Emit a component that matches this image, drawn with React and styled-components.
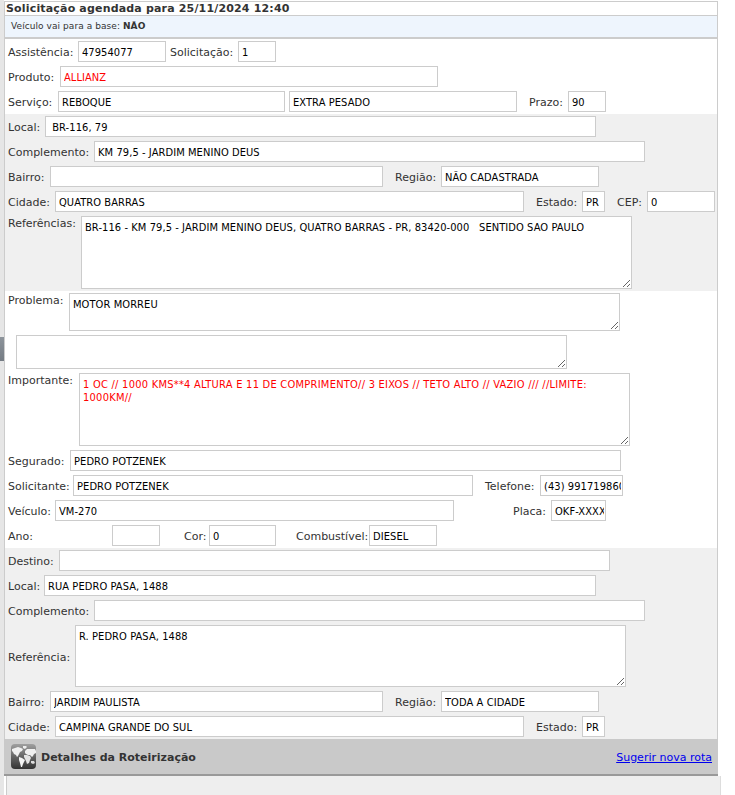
import styled, { createGlobalStyle } from 'styled-components';

const GlobalStyle = createGlobalStyle`
  html, body {
    margin: 0;
    padding: 0;
    background: #ffffff;
  }
`;

function Line({ children }) {
  return <Row>{children}</Row>;
}

function Field({ label, lw, w, value, red, ml }) {
  return (
    <>
      <Label $w={lw} $ml={ml}>{label}</Label>
      <Input $w={w} $red={red} value={value} readOnly />
    </>
  );
}

function WorldIcon() {
  return (
    <svg width="25" height="25" viewBox="0 0 25 25">
      <defs>
        <linearGradient id="globeBg" x1="0" y1="0" x2="0" y2="1">
          <stop offset="0" stopColor="#a0a0a0" />
          <stop offset="0.5" stopColor="#666666" />
          <stop offset="1" stopColor="#333333" />
        </linearGradient>
      </defs>
      <rect width="25" height="25" rx="4" fill="url(#globeBg)" />
      <path d="M1 5l3-1 3-1 3 1 2 1-1 2-2 1-1 2-1 2-1 1-1-2-2-1-1-2-1-1z" fill="#f0f0f0" />
      <path d="M12 2l3 0 1 1-2 2-2-1z" fill="#eeeeee" />
      <path d="M8 13l3 1 3 2-1 2-1 2-1 3-1 0-1-4-1-3z" fill="#f4f4f4" />
      <path d="M14 7l2-2 3 0 5 0 1 2 0 2-2 1-1 2-1 1-2-2-2 0-2-1-1-1z" fill="#f0f0f0" />
      <path d="M13 11l3 0 3 1 1 2-1 2-1 3-2 1-1-3-1-2-1-2z" fill="#e4e4e4" />
      <path d="M20 17l3 0 1 2-2 1-2-1z" fill="#dddddd" />
    </svg>
  );
}

export default function App() {
  return (
    <>
      <GlobalStyle />
      <Page>
        <ScrollTrack>
          <ScrollThumb />
        </ScrollTrack>
        <Panel>
          <Title>Solicitação agendada para 25/11/2024 12:40</Title>
          <Notice>
            Veículo vai para a base: <b>NÃO</b>
          </Notice>

          <Section>
            <Line>
              <Field label="Assistência:" lw={70} w={88} value="47954077" />
              <Field label="Solicitação:" lw={68} ml={4} w={38} value="1" />
            </Line>
            <Line>
              <Field label="Produto:" lw={52} w={378} value="ALLIANZ" red />
            </Line>
            <Line>
              <Field label="Serviço:" lw={50} w={227} value="REBOQUE" />
              <Input $w={228} $ml={4} value="EXTRA PESADO" readOnly />
              <Field label="Prazo:" lw={39} ml={12} w={38} value="90" />
            </Line>
          </Section>

          <Section $grey>
            <Line>
              <Field label="Local:" lw={37} w={551} value=" BR-116, 79" />
            </Line>
            <Line>
              <Field label="Complemento:" lw={86} w={551} value="KM 79,5 - JARDIM MENINO DEUS" />
            </Line>
            <Line>
              <Field label="Bairro:" lw={42} w={333} value="" />
              <Field label="Região:" lw={46} ml={12} w={158} value="NÃO CADASTRADA" />
            </Line>
            <Line>
              <Field label="Cidade:" lw={47} w={469} value="QUATRO BARRAS" />
              <Field label="Estado:" lw={46} ml={12} w={23} value="PR" />
              <Field label="CEP:" lw={30} ml={12} w={68} value="0" />
            </Line>
            <TextRow>
              <TopLabel $w={73}>Referências:</TopLabel>
              <TextArea
                $w={551}
                $h={73}
                readOnly
                value="BR-116 - KM 79,5 - JARDIM MENINO DEUS, QUATRO BARRAS - PR, 83420-000   SENTIDO SAO PAULO"
              />
            </TextRow>
          </Section>

          <Section>
            <TextRow>
              <TopLabel $w={61}>Problema:</TopLabel>
              <TextArea $w={551} $h={38} readOnly value="MOTOR MORREU" />
            </TextRow>
            <TextRow>
              <TopLabel $w={8} />
              <TextArea $w={551} $h={34} readOnly value="" />
            </TextRow>
            <TextRow>
              <TopLabel $w={71}>Importante:</TopLabel>
              <TextArea
                $w={551}
                $h={73}
                $red
                readOnly
                value={'1 OC // 1000 KMS**4 ALTURA E 11 DE COMPRIMENTO// 3 EIXOS // TETO ALTO // VAZIO /// //LIMITE:\n1000KM//'}
              />
            </TextRow>
            <Line>
              <Field label="Segurado:" lw={62} w={551} value="PEDRO POTZENEK" />
            </Line>
            <Line>
              <Field label="Solicitante:" lw={65} w={400} value="PEDRO POTZENEK" />
              <Field label="Telefone:" lw={55} ml={12} w={83} value="(43) 991719860" />
            </Line>
            <Line>
              <Field label="Veículo:" lw={47} w={399} value="VM-270" />
              <Field label="Placa:" lw={38} ml={59} w={55} value="OKF-XXXX" />
            </Line>
            <Line>
              <Field label="Ano:" lw={104} w={48} value="" />
              <Field label="Cor:" lw={25} ml={24} w={67} value="0" />
              <Field label="Combustível:" lw={73} ml={20} w={68} value="DIESEL" />
            </Line>
          </Section>

          <Section $grey>
            <Line>
              <Field label="Destino:" lw={51} w={551} value="" />
            </Line>
            <Line>
              <Field label="Local:" lw={36} w={552} value="RUA PEDRO PASA, 1488" />
            </Line>
            <Line>
              <Field label="Complemento:" lw={86} w={551} value="" />
            </Line>
            <TextRow $center>
              <TopLabel $w={67} $center>Referência:</TopLabel>
              <TextArea $w={551} $h={62} readOnly value="R. PEDRO PASA, 1488" />
            </TextRow>
            <Line>
              <Field label="Bairro:" lw={42} w={333} value="JARDIM PAULISTA" />
              <Field label="Região:" lw={46} ml={12} w={158} value="TODA A CIDADE" />
            </Line>
            <Line>
              <Field label="Cidade:" lw={47} w={469} value="CAMPINA GRANDE DO SUL" />
              <Field label="Estado:" lw={46} ml={12} w={23} value="PR" />
            </Line>
          </Section>

          <RouteHeader>
            <RouteTitle>
              <WorldIcon />
              <RouteName>Detalhes da Roteirização</RouteName>
            </RouteTitle>
            <RouteLink href="#">Sugerir nova rota</RouteLink>
          </RouteHeader>
        </Panel>
        <RouteBody />
      </Page>
    </>
  );
}

const Page = styled.div`
  position: relative;
  width: 735px;
  height: 795px;
  overflow: hidden;
  font-family: 'DejaVu Sans', Verdana, sans-serif;
  font-size: 11px;
  color: #333333;
`;

const ScrollTrack = styled.div`
  position: absolute;
  left: 0;
  top: 0;
  width: 4px;
  height: 795px;
  background: #e6e6e6;
`;

const ScrollThumb = styled.div`
  position: absolute;
  left: 0;
  top: 337px;
  width: 4px;
  height: 24px;
  background: linear-gradient(#8d949b, #747b83);
`;

const Panel = styled.div`
  margin: 1px 0 0 4px;
  width: 714px;
  box-sizing: border-box;
  border-left: 1px solid #cccccc;
  border-right: 1px solid #cccccc;
  border-top: 1px solid #cccccc;
`;

const Title = styled.div`
  height: 13px;
  line-height: 13px;
  padding-left: 1px;
  font-size: 11px;
  font-weight: 700;
  letter-spacing: 0.17px;
  color: #333333;
  border-bottom: 1px solid #cccccc;
`;

const Notice = styled.div`
  height: 21px;
  line-height: 21px;
  padding-left: 6px;
  font-size: 9px;
  letter-spacing: 0.07px;
  color: #333333;
  background: #eef5fd;
  border-bottom: 2px solid #cccccc;
`;

const Section = styled.div`
  display: flex;
  flex-direction: column;
  gap: 4px;
  padding: 2px 0 2px 3px;
  background: ${(p) => (p.$grey ? '#f0f0f0' : '#ffffff')};
`;

const Row = styled.div`
  display: flex;
  align-items: center;
  height: 21px;
`;

const TextRow = styled.div`
  display: flex;
  align-items: ${(p) => (p.$center ? 'center' : 'flex-start')};
`;

const Label = styled.span`
  flex: none;
  width: ${(p) => p.$w}px;
  margin-left: ${(p) => p.$ml || 0}px;
  padding-top: 1px;
  white-space: nowrap;
`;

const TopLabel = styled.span`
  flex: none;
  width: ${(p) => p.$w}px;
  padding-top: ${(p) => (p.$center ? '2px' : '1px')};
  white-space: nowrap;
`;

const Input = styled.input`
  flex: none;
  box-sizing: border-box;
  width: ${(p) => p.$w}px;
  height: 21px;
  margin: 0 0 0 ${(p) => p.$ml || 0}px;
  padding: 2px 1px 1px 3px;
  border: 1px solid #cccccc;
  outline: none;
  background: #ffffff;
  font-family: 'DejaVu Sans Condensed', 'Liberation Sans', sans-serif;
  font-size: 11px;
  letter-spacing: 0.08px;
  color: ${(p) => (p.$red ? '#ff0000' : '#000000')};
`;

const TextArea = styled.textarea`
  flex: none;
  display: block;
  box-sizing: border-box;
  width: ${(p) => p.$w}px;
  height: ${(p) => p.$h}px;
  margin: 0;
  padding: 4px 3px 3px;
  border: 1px solid #cccccc;
  outline: none;
  background: #ffffff;
  font-family: 'DejaVu Sans Condensed', 'Liberation Sans', sans-serif;
  font-size: 11px;
  letter-spacing: ${(p) => (p.$red ? '0.25px' : '0.08px')};
  color: ${(p) => (p.$red ? '#ff0000' : '#000000')};
`;

const RouteHeader = styled.div`
  display: flex;
  align-items: center;
  justify-content: space-between;
  height: 35px;
  margin-left: -1px;
  margin-right: -1px;
  padding: 0 6px 0 7px;
  background: #c9c9c9;
  border-bottom: 2px solid #999999;
`;

const RouteTitle = styled.div`
  display: flex;
  align-items: center;
  gap: 5px;
  font-size: 11px;
  font-weight: 700;
  color: #333333;
`;

const RouteName = styled.span`
  padding-top: 2px;
`;

const RouteLink = styled.a`
  padding-top: 2px;
  color: #0000ee;
  font-size: 11px;
`;

const RouteBody = styled.div`
  margin-left: 6px;
  width: 713px;
  height: 20px;
  background: #eeeeee;
  border-left: 1px solid #cccccc;
  border-right: 1px solid #dddddd;
`;
